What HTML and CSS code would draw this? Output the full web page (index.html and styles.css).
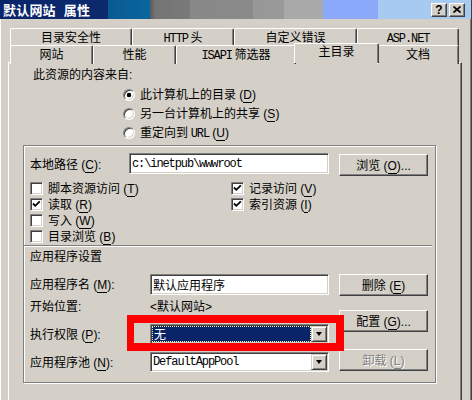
FILE: index.html
```html
<!DOCTYPE html>
<html lang="zh-CN">
<head>
    <meta charset="UTF-8">
    <meta name="viewport" content="width=device-width, initial-scale=1.0">
    <title>默认网站 属性</title>
    <link rel="stylesheet" href="styles.css">
</head>
<body>
    <div class="dialog">
        <div class="titlebar">
            <span class="title">默认网站<span class="title-gap"></span>属性</span>
            <div class="caption-buttons">
                <button class="caption-btn">?</button>
                <button class="caption-btn">
                    <svg width="8" height="7" viewBox="0 0 8 7"><path d="M0.5 0.5 L7.5 6.5 M7.5 0.5 L0.5 6.5" stroke="#000" stroke-width="1.7"/></svg>
                </button>
            </div>
        </div>

        <div class="tabs">
            <div class="tab-row back">
                <div class="tab">目录安全性</div>
                <div class="tab"><span class="mono">HTTP</span> 头</div>
                <div class="tab">自定义错误</div>
                <div class="tab"><span class="mono">ASP.NET</span></div>
            </div>
            <div class="tab-row front">
                <div class="tab">网站</div>
                <div class="tab">性能</div>
                <div class="tab"><span class="mono">ISAPI</span> 筛选器</div>
                <div class="tab active">主目录</div>
                <div class="tab">文档</div>
            </div>
        </div>

        <div class="panel">
            <div class="source-title">此资源的内容来自<span class="key">:</span></div>
            <div class="radios">
                <div class="radio-row"><span class="radio checked"></span><span>此计算机上的目录<span class="key"> (<u>D</u>)</span></span></div>
                <div class="radio-row"><span class="radio"></span><span>另一台计算机上的共享<span class="key"> (<u>S</u>)</span></span></div>
                <div class="radio-row"><span class="radio"></span><span>重定向到 <span class="mono">URL</span><span class="key"> (<u>U</u>)</span></span></div>
            </div>

            <div class="groupbox">
                <div class="path-row">
                    <span class="label">本地路径<span class="key"> (<u>C</u>):</span></span>
                    <div class="field path-field mono">c:\inetpub\wwwroot</div>
                    <button class="btn side-btn">浏览<span class="key"> (<u>O</u>)...</span></button>
                </div>

                <div class="checks">
                    <div class="check-row"><span class="checkbox"></span><span>脚本资源访问<span class="key"> (<u>T</u>)</span></span></div>
                    <div class="check-row"><span class="checkbox checked"><svg width="11" height="11" viewBox="0 0 11 11"><path d="M2 4.5 L4.3 6.8 L8.8 2.3" fill="none" stroke="#000" stroke-width="1.8"/></svg></span><span>记录访问<span class="key"> (<u>V</u>)</span></span></div>
                    <div class="check-row"><span class="checkbox checked"><svg width="11" height="11" viewBox="0 0 11 11"><path d="M2 4.5 L4.3 6.8 L8.8 2.3" fill="none" stroke="#000" stroke-width="1.8"/></svg></span><span>读取<span class="key"> (<u>R</u>)</span></span></div>
                    <div class="check-row"><span class="checkbox checked"><svg width="11" height="11" viewBox="0 0 11 11"><path d="M2 4.5 L4.3 6.8 L8.8 2.3" fill="none" stroke="#000" stroke-width="1.8"/></svg></span><span>索引资源<span class="key"> (<u>I</u>)</span></span></div>
                    <div class="check-row"><span class="checkbox"></span><span>写入<span class="key"> (<u>W</u>)</span></span></div>
                    <div></div>
                    <div class="check-row"><span class="checkbox"></span><span>目录浏览<span class="key"> (<u>B</u>)</span></span></div>
                </div>

                <div class="separator"></div>
                <div class="section-title">应用程序设置</div>

                <div class="app">
                    <div class="app-fields">
                        <div class="app-row name-row">
                            <span class="label">应用程序名<span class="key"> (<u>M</u>):</span></span>
                            <div class="field app-field">默认应用程序</div>
                        </div>
                        <div class="app-row start-row">
                            <span class="label">开始位置<span class="key">:</span></span>
                            <span><span class="key">&lt;</span>默认网站<span class="key">&gt;</span></span>
                        </div>
                        <div class="app-row perm-row">
                            <span class="label">执行权限<span class="key"> (<u>P</u>):</span></span>
                            <div class="combo-wrap">
                                <div class="combo">
                                    <span class="combo-value selected">无</span>
                                    <span class="combo-arrow"></span>
                                </div>
                                <div class="highlight"></div>
                            </div>
                        </div>
                        <div class="app-row pool-row">
                            <span class="label">应用程序池<span class="key"> (<u>N</u>):</span></span>
                            <div class="combo">
                                <span class="combo-value mono">DefaultAppPool</span>
                                <span class="combo-arrow"></span>
                            </div>
                        </div>
                    </div>
                    <div class="app-buttons">
                        <button class="btn side-btn">删除<span class="key"> (<u>E</u>)</span></button>
                        <button class="btn side-btn config-btn">配置<span class="key"> (<u>G</u>)...</span></button>
                        <button class="btn side-btn unload-btn disabled">卸载<span class="key"> (<u>L</u>)</span></button>
                    </div>
                </div>
            </div>
        </div>
    </div>
</body>
</html>
```

FILE: styles.css
```css
* {
    box-sizing: border-box;
}

body {
    margin: 0;
    width: 472px;
    height: 400px;
    overflow: hidden;
    background-color: #d4d0c8;
    font-family: "Noto Sans CJK SC", sans-serif;
    font-size: 12px;
    line-height: 14px;
    color: #000;
}

u {
    text-decoration: none;
    border-bottom: 1px solid currentColor;
}

/* Latin parts of labels: access keys, colons, brackets */
.key {
    font-family: "Liberation Sans", sans-serif;
    font-size: 12px;
    letter-spacing: 0;
}

.mono {
    font-family: "Liberation Mono", "Noto Sans CJK SC", monospace;
    font-size: 12px;
    letter-spacing: -1.1px;
}

/* Window frame */
.dialog {
    width: 472px;
    height: 400px;
    border-right: 1px solid #404040;
    box-shadow: inset 1px 0 #fff, inset -1px 0 #808080;
}

.titlebar {
    height: 19px;
    display: flex;
    align-items: center;
    justify-content: space-between;
    padding: 0 6px 0 3px;
    background: linear-gradient(to right,
        #0a246a 0, #0c2a6e 108px,
        #0a5a92 108px, #0a66a0 150px,
        #5c5c5c 150px, #6c6c6c 154px,
        #747474 154px, #7a7a7a 190px,
        #888888 190px, #8a8a8a 253px,
        #979797 253px, #9a9a9a 284px,
        #a9a9a9 284px, #aaaaaa 323px,
        #8aa9fa 323px, #8aa9fa 378px,
        #a6caf0 378px, #a6caf0 100%);
}

.title {
    color: #fff;
    font-weight: bold;
    font-size: 13px;
    letter-spacing: 0.2px;
    line-height: 16px;
}

.title-gap {
    display: inline-block;
    width: 8px;
}

.caption-buttons {
    display: flex;
    gap: 2px;
}

.caption-btn {
    width: 16px;
    height: 14px;
    padding: 0;
    display: flex;
    align-items: center;
    justify-content: center;
    background-color: #d4d0c8;
    border: 1px solid;
    border-color: #fff #404040 #404040 #fff;
    box-shadow: inset -1px -1px #808080;
    font-family: "Liberation Sans", sans-serif;
    font-weight: bold;
    font-size: 12px;
    line-height: 12px;
    color: #000;
}

/* Tabs */
.tabs {
    margin: 9px 0 0 10px;
    width: 449px;
}

.tab-row {
    display: grid;
    height: 17px;
}

.tab-row.back {
    grid-template-columns: 122px 102px 123px 102px;
}

.tab-row.front {
    grid-template-columns: 83px 83px 120px 81px 82px;
}

.tab {
    background-color: #d4d0c8;
    border-top: 1px solid #fff;
    border-left: 1px solid #fff;
    border-right: 1px solid #404040;
    box-shadow: inset -1px 0 #808080;
    border-radius: 2px 2px 0 0;
    text-align: center;
    line-height: 16px;
    white-space: nowrap;
}

.tab.active {
    margin: -2px -2px 0;
    height: 20px;
    line-height: 13px;
    position: relative;
    z-index: 1;
}

/* Page */
.panel {
    margin-left: 8px;
    width: 454px;
    height: 340px;
    border-top: 1px solid #fff;
    border-left: 1px solid #fff;
    border-right: 1px solid #404040;
    box-shadow: inset -1px 0 #808080;
    padding-top: 4px;
}

.source-title {
    padding-left: 24px;
}

.radios {
    margin-top: 3px;
    padding-left: 114px;
}

.radio-row {
    height: 19px;
    display: flex;
    align-items: center;
}

.radio {
    width: 12px;
    height: 12px;
    margin-right: 5px;
    border-radius: 50%;
    border: 1px solid;
    border-color: #808080 #fff #fff #808080;
    box-shadow: inset 1px 1px #404040, inset -1px -1px #d4d0c8;
    background-color: #fff;
}

.radio.checked {
    background: radial-gradient(circle, #000 0, #000 2px, #fff 2.6px);
}

.groupbox {
    margin: 3px 0 0 14px;
    width: 413px;
    border: 1px solid #808080;
    box-shadow: inset 1px 1px #fff, 1px 1px #fff;
    padding-bottom: 10px;
}

.label {
    flex-shrink: 0;
}

.path-row {
    display: flex;
    align-items: flex-start;
    margin-top: 7px;
    padding-left: 6px;
}

.path-row .label {
    width: 99px;
    line-height: 21px;
}

.field {
    height: 21px;
    display: flex;
    align-items: center;
    padding: 0 2px;
    background-color: #fff;
    border: 1px solid;
    border-color: #808080 #fff #fff #808080;
    box-shadow: inset 1px 1px #404040, inset -1px -1px #d4d0c8;
    white-space: nowrap;
}

.path-field {
    width: 200px;
}

.btn {
    height: 22px;
    padding: 0;
    font: inherit;
    color: #000;
    background-color: #d4d0c8;
    border: 1px solid;
    border-color: #fff #404040 #404040 #fff;
    box-shadow: inset -1px -1px #808080;
}

.side-btn {
    width: 89px;
}

.path-row .side-btn {
    margin: 1px 0 0 10px;
}

.btn.disabled {
    color: #808080;
    text-shadow: 1px 1px #fff;
}

.checks {
    display: grid;
    grid-template-columns: 201px auto;
    grid-auto-rows: 16px;
    margin-top: 4px;
    padding-left: 6px;
}

.check-row {
    display: flex;
    align-items: center;
}

.checkbox {
    width: 13px;
    height: 13px;
    margin-right: 5px;
    background-color: #fff;
    border: 1px solid;
    border-color: #808080 #fff #fff #808080;
    box-shadow: inset 1px 1px #404040, inset -1px -1px #d4d0c8;
}

.checkbox svg {
    display: block;
}

.separator {
    margin: 1px 3px 0 0;
    border-top: 1px solid #808080;
    border-bottom: 1px solid #fff;
}

.section-title {
    margin-top: 2px;
    padding-left: 6px;
}

/* Application settings */
.app {
    display: flex;
    margin-top: 11px;
    padding-left: 6px;
}

.app-fields {
    width: 299px;
}

.app-row {
    display: flex;
    align-items: center;
}

.app-row .label {
    width: 120px;
}

.name-row {
    height: 21px;
}

.app-field {
    width: 179px;
}

.start-row {
    height: 16px;
    margin-top: 3px;
}

.perm-row {
    height: 20px;
    margin-top: 10px;
}

.pool-row {
    height: 20px;
    margin-top: 8px;
}

.combo-wrap {
    position: relative;
}

.combo {
    width: 179px;
    height: 20px;
    display: flex;
    padding: 1px;
    background-color: #fff;
    border: 1px solid;
    border-color: #808080 #fff #fff #808080;
    box-shadow: inset 1px 1px #404040, inset -1px -1px #d4d0c8;
}

.combo-value {
    flex: 1;
    display: flex;
    align-items: center;
    padding-left: 1px;
    white-space: nowrap;
}

.combo-value.selected {
    background-color: #0a246a;
    color: #fff;
    border: 1px dotted #f0f0a0;
}

.combo-arrow {
    width: 16px;
    height: 16px;
    display: flex;
    align-items: center;
    justify-content: center;
    background-color: #d4d0c8;
    border: 1px solid;
    border-color: #d4d0c8 #404040 #404040 #d4d0c8;
    box-shadow: inset 1px 1px #fff, inset -1px -1px #808080;
}

.combo-arrow::after {
    content: "";
    border-left: 3.5px solid transparent;
    border-right: 3.5px solid transparent;
    border-top: 4px solid #000;
}

/* Red marker drawn over the permissions box */
.highlight {
    position: absolute;
    left: -23px;
    top: -9px;
    width: 217px;
    height: 36px;
    border: 8px solid #ff0000;
    border-left-width: 7px;
    z-index: 2;
}

.app-buttons {
    display: flex;
    flex-direction: column;
    margin-left: 10px;
}

.config-btn {
    margin-top: 14px;
}

.unload-btn {
    margin-top: 17px;
}
```
